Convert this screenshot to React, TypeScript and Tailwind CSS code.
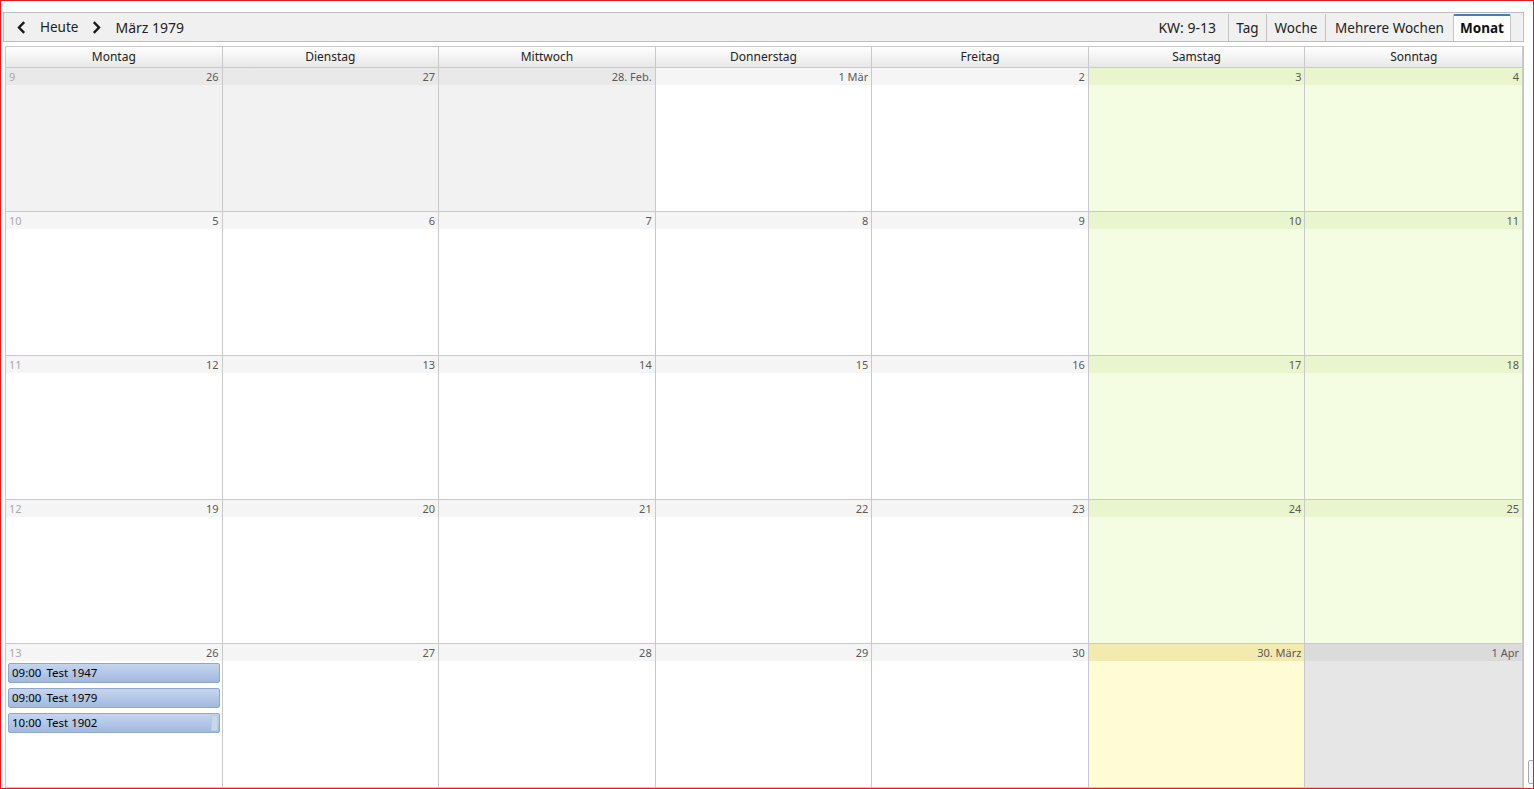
import React from "react";

type Kind = "prev" | "cur" | "we" | "today" | "next";

type Day = { label: string; kind: Kind };

type Week = { kw: number; days: Day[] };

const dayNames = ["Montag", "Dienstag", "Mittwoch", "Donnerstag", "Freitag", "Samstag", "Sonntag"];

function row(kw: number, labels: string[], kinds: Kind[]): Week {
  return { kw, days: labels.map((label, i) => ({ label, kind: kinds[i] })) };
}

const normal: Kind[] = ["cur", "cur", "cur", "cur", "cur", "we", "we"];

const weeks: Week[] = [
  row(9, ["26", "27", "28. Feb.", "1 Mär", "2", "3", "4"], ["prev", "prev", "prev", "cur", "cur", "we", "we"]),
  row(10, ["5", "6", "7", "8", "9", "10", "11"], normal),
  row(11, ["12", "13", "14", "15", "16", "17", "18"], normal),
  row(12, ["19", "20", "21", "22", "23", "24", "25"], normal),
  row(13, ["26", "27", "28", "29", "30", "30. März", "1 Apr"], ["cur", "cur", "cur", "cur", "cur", "today", "next"]),
];

const cellBg: Record<Kind, string> = {
  prev: "bg-[#f2f2f2]",
  cur: "bg-white",
  we: "bg-[#f4fde2]",
  today: "bg-[#fffbd5]",
  next: "bg-[#e6e6e6]",
};

const stripBg: Record<Kind, string> = {
  prev: "bg-[#e9e9e9]",
  cur: "bg-[#f5f5f5]",
  we: "bg-[#e9f5cc]",
  today: "bg-[#f3eaaf]",
  next: "bg-[#dbdbdb]",
};

const events = [
  { time: "09:00", title: "Test 1947", handle: false },
  { time: "09:00", title: "Test 1979", handle: false },
  { time: "10:00", title: "Test 1902", handle: true },
];

function Chevron({ dir }: { dir: "left" | "right" }) {
  return (
    <svg width="9" height="13" viewBox="0 0 9 13" className="shrink-0">
      {dir === "left" ? (
        <path d="M7.2 1.2 L2 6.5 L7.2 11.8" fill="none" stroke="#1a1a1a" strokeWidth="2.4" />
      ) : (
        <path d="M1.8 1.2 L7 6.5 L1.8 11.8" fill="none" stroke="#1a1a1a" strokeWidth="2.4" />
      )}
    </svg>
  );
}

function Toolbar() {
  return (
    <div className="w-[1521px] h-[30px] border border-[#bdbdbd] bg-[#f0f0f0] flex items-stretch text-[13.5px] text-[#222]">
      <div className="flex items-center pl-[13px]">
        <Chevron dir="left" />
        <span className="ml-[14px]">Heute</span>
        <span className="ml-[14px] flex">
          <Chevron dir="right" />
        </span>
        <span className="ml-[14px] text-[14px]">März 1979</span>
      </div>
      <div className="ml-auto flex items-stretch mr-[12px]">
        <div className="flex items-center mr-[12px] text-[14px]">KW: 9-13</div>
        <div className="mt-[1px] w-[38px] border-l border-[#c4c4c4] flex items-center justify-center pt-[1px]">Tag</div>
        <div className="mt-[1px] w-[59px] border-l border-[#c4c4c4] flex items-center justify-center pt-[1px]">Woche</div>
        <div className="mt-[1px] w-[128px] border-l border-[#c4c4c4] flex items-center justify-center pt-[1px]">
          Mehrere Wochen
        </div>
        <div className="mt-[1px] w-[58px] border-x border-[#c4c4c4] border-t-2 border-t-[#3d80c2] rounded-t-[2px] bg-white flex items-center justify-center font-bold text-[#111]">
          Monat
        </div>
      </div>
    </div>
  );
}

function Cell({ day, kw, first, last, showEvents }: { day: Day; kw: number; first: boolean; last: boolean; showEvents: boolean }) {
  return (
    <div className={`h-[144px] border-b border-[#c9c9c9] ${last ? "" : "border-r"} ${cellBg[day.kind]} flex flex-col`}>
      <div className={`h-[17px] ${stripBg[day.kind]} flex items-center px-[3px] text-[11px] leading-none`}>
        {first && <span className="text-[#a9a9a9]">{kw}</span>}
        <span className="ml-auto text-[#5a5a5a]">{day.label}</span>
      </div>
      {showEvents && (
        <div className="flex flex-col gap-[5px] pt-[2px] pl-[2px] pr-[2px]">
          {events.map((e, i) => (
            <div
              key={i}
              className="relative h-[20px] rounded-[2px] border border-[#8fa7cc] bg-gradient-to-b from-[#c5d5ee] to-[#a2b9dd] flex items-center pl-[3px] text-[11.5px] text-black"
            >
              <span>{e.time}</span>
              <span className="ml-[5px]">{e.title}</span>
              {e.handle && (
                <span className="absolute right-[1px] top-[1px] bottom-[1px] w-[7px] rounded-[1px] border border-[#b9c9e2] bg-[#c9d7ec]" />
              )}
            </div>
          ))}
        </div>
      )}
    </div>
  );
}

function MonthGrid() {
  return (
    <div className="w-[1519px] border-r border-[#b9c5d2]">
      <div className="w-[1518px] border-l border-t border-r border-[#c9c9c9]">
        <div className="grid grid-cols-7">
          {dayNames.map((d, i) => (
            <div
              key={d}
              className={`h-[21px] border-b border-[#c9c9c9] ${i < 6 ? "border-r" : ""} bg-gradient-to-b from-white to-[#e8e8e8] flex items-center justify-center text-[12px] text-[#222]`}
            >
              {d}
            </div>
          ))}
        </div>
        {weeks.map((w) => (
          <div key={w.kw} className="grid grid-cols-7">
            {w.days.map((d, i) => (
              <Cell key={i} day={d} kw={w.kw} first={i === 0} last={i === 6} showEvents={w.kw === 13 && i === 0} />
            ))}
          </div>
        ))}
      </div>
    </div>
  );
}

export default function App() {
  return (
    <div className="relative w-[1534px] h-[789px] overflow-hidden border border-[#e01c1c] bg-white font-['Noto_Sans','Open_Sans',sans-serif]">
      <div className="pt-[11px] pl-[2px]">
        <Toolbar />
        <div className="mt-[4px] ml-[2px]">
          <MonthGrid />
        </div>
      </div>
      <div className="absolute right-[-3px] top-[759px] w-[8px] h-[24px] rounded-[2px] border border-[#a9a9a9] bg-[#f7f7f7]" />
    </div>
  );
}
